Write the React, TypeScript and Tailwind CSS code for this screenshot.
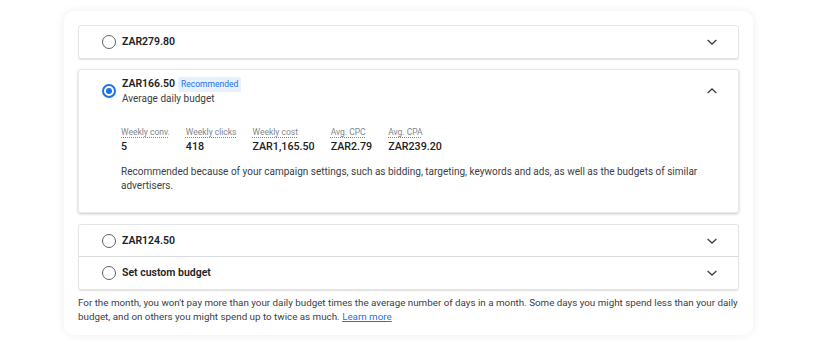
import React from 'react';

const font = { fontFamily: 'Roboto, "Liberation Sans", sans-serif' };

function Chevron({ up = false }: { up?: boolean }) {
    return (
        <svg width="14" height="14" viewBox="0 0 24 24" className="text-[#3c4043]">
            <path
                d={up ? 'M4.5 15.5l7.5-7 7.5 7' : 'M4.5 8.5l7.5 7 7.5-7'}
                fill="none"
                stroke="currentColor"
                strokeWidth="2.2"
            />
        </svg>
    );
}

function Radio({ checked = false }: { checked?: boolean }) {
    return checked ? (
        <span className="flex h-[14px] w-[14px] shrink-0 items-center justify-center rounded-full border-2 border-[#1a73e8]">
            <span className="h-[6px] w-[6px] rounded-full bg-[#1a73e8]" />
        </span>
    ) : (
        <span className="h-[14px] w-[14px] shrink-0 rounded-full border-[1.5px] border-[#5f6368]" />
    );
}

function Row({ label, className = '' }: { label: string; className?: string }) {
    return (
        <div className={`flex h-[32px] items-center pl-[23px] pr-[19px] ${className}`}>
            <Radio />
            <span className="ml-[6px] flex-1 text-[10.5px] font-semibold text-[#202124]">{label}</span>
            <Chevron />
        </div>
    );
}

const metrics = [
    { label: 'Weekly conv.', value: '5' },
    { label: 'Weekly clicks', value: '418' },
    { label: 'Weekly cost', value: 'ZAR1,165.50' },
    { label: 'Avg. CPC', value: 'ZAR2.79' },
    { label: 'Avg. CPA', value: 'ZAR239.20' },
];

export default function App() {
    return (
        <div className="min-h-[345px] bg-white pl-[64px] pt-[11px]" style={font}>
            <div className="w-[689px] rounded-[10px] bg-white px-[14px] pb-[11px] pt-[14px] shadow-[0_0_10px_rgba(0,0,0,0.07)]">
                <div className="rounded-[3px] border border-[#e4e4e4] shadow-[0_1px_1px_rgba(0,0,0,0.12)]">
                    <Row label="ZAR279.80" />
                </div>

                <div className="mt-[10px] rounded-[3px] border border-[#e8e8e8] pb-[19px] shadow-[0_1px_3px_rgba(0,0,0,0.22)]">
                    <div className="flex items-center pl-[23px] pr-[19px] pt-[6px]">
                        <Radio checked />
                        <div className="ml-[6px] flex-1">
                            <div className="flex items-center">
                                <span className="text-[10.5px] font-semibold leading-[16px] text-[#202124]">ZAR166.50</span>
                                <span className="ml-[3px] rounded-[2px] bg-[#e8f0fe] px-[3px] text-[8.5px] leading-[15px] text-[#1a73e8]">
                                    Recommended
                                </span>
                            </div>
                            <div className="text-[10px] leading-[14px] text-[#3c4043]">Average daily budget</div>
                        </div>
                        <Chevron up />
                    </div>

                    <div className="pl-[42px] pr-[19px]">
                        <div className="mt-[20px] flex gap-[16px]">
                            {metrics.map((m) => (
                                <div key={m.label} className="flex flex-col">
                                    <span className="text-[8.5px] leading-[13px] text-[#80868b] underline decoration-dotted underline-offset-2">
                                        {m.label}
                                    </span>
                                    <span className="text-[10.7px] font-medium leading-[16px] text-[#202124]">{m.value}</span>
                                </div>
                            ))}
                        </div>
                        <p className="mt-[10px] text-[10px] leading-[14px] text-[#3c4043]">
                            Recommended because of your campaign settings, such as bidding, targeting, keywords and ads, as well as the budgets of similar advertisers.
                        </p>
                    </div>
                </div>

                <div className="mt-[11px] rounded-[3px] border border-[#e4e4e4] shadow-[0_1px_1px_rgba(0,0,0,0.12)]">
                    <Row label="ZAR124.50" className="border-b border-[#dadce0]" />
                    <Row label="Set custom budget" />
                </div>

                <p className="mt-[6px] text-[9.8px] leading-[14px] text-[#3c4043]">
                    For the month, you won't pay more than your daily budget times the average number of days in a month. Some days you might spend less than your daily budget, and on others you might spend up to twice as much.{' '}
                    <a href="#" className="text-[#1a73e8] underline">
                        Learn more
                    </a>
                </p>
            </div>
        </div>
    );
}
